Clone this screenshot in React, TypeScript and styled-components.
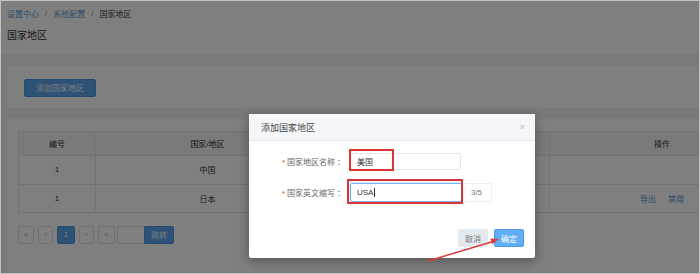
import React from 'react';
import styled, { createGlobalStyle } from 'styled-components';

const GlobalStyle = createGlobalStyle`
  html, body {
    margin: 0;
    padding: 0;
    background: #fff;
  }
  body {
    font-family: "Liberation Sans", "Noto Sans CJK SC", sans-serif;
  }
  * {
    box-sizing: border-box;
  }
`;

const Frame = styled.div`
  position: relative;
  width: 700px;
  height: 274px;
  border: 1px solid #c2c2c2;
  overflow: hidden;
  background: #fff;
`;

// the page is wider than the crop, so its right side is cut off
const Page = styled.div`
  width: 790px;
  height: 100%;
  display: flex;
  flex-direction: column;
`;

const Header = styled.header`
  padding: 6px 6px 11px;
  background: #fff;
`;

const Breadcrumb = styled.nav`
  display: flex;
  align-items: center;
  gap: 6px;
  height: 12px;
  font-size: 8px;
`;

const Crumb = styled.span<{ $link?: boolean }>`
  color: ${p => (p.$link ? '#5b9ad6' : '#444')};
`;

const Sep = styled.span`
  color: #999;
`;

const Title = styled.h1`
  margin: 10px 0 0;
  font-size: 10px;
  line-height: 14px;
  font-weight: normal;
  color: #333;
`;

const Content = styled.main`
  flex: 1;
  display: flex;
  flex-direction: column;
  gap: 11px;
  padding: 11px 6px 0;
  background: #f2f3f5;
`;

const Card = styled.section<{ $pad: string; $grow?: boolean }>`
  background: #fff;
  padding: ${p => p.$pad};
  flex: ${p => (p.$grow ? 1 : 'none')};
`;

const PrimaryButton = styled.button<{ $w: number }>`
  width: ${p => p.$w}px;
  height: 18px;
  padding: 0;
  border: 1px solid #4f96dc;
  border-radius: 2px;
  background: #5ba4ec;
  color: #f4f8fc;
  font-family: inherit;
  font-size: 8px;
`;

const Table = styled.table`
  width: 756px;
  border-collapse: collapse;
  table-layout: fixed;
  font-size: 8px;
  color: #333;
`;

const Th = styled.th`
  height: 24px;
  padding: 0;
  background: #f4f4f4;
  border: 1px solid #e6e6e6;
  font-weight: normal;
  text-align: center;
`;

const Td = styled.td<{ $h: number }>`
  height: ${p => p.$h}px;
  padding: 0;
  border: 1px solid #e6e6e6;
  text-align: center;
`;

const Actions = styled.div`
  display: flex;
  justify-content: center;
  gap: 12px;
`;

const ActionLink = styled.a`
  color: #4a90d0;
  text-decoration: none;
`;

const Pager = styled.div`
  display: flex;
  align-items: center;
  gap: 4px;
  margin-top: 13px;
`;

const PageItem = styled.span<{ $w: number; $active?: boolean }>`
  width: ${p => p.$w}px;
  height: 18px;
  display: flex;
  align-items: center;
  justify-content: center;
  border: 1px solid ${p => (p.$active ? '#4f96dc' : '#e3e3e3')};
  border-radius: 2px;
  background: ${p => (p.$active ? '#5ba4ec' : '#fff')};
  color: ${p => (p.$active ? '#f4f8fc' : '#bbb')};
  font-size: 8px;
`;

const JumpGroup = styled.div`
  display: flex;
  margin-left: -2px;
`;

const JumpInput = styled.span`
  width: 27px;
  height: 18px;
  border: 1px solid #e3e3e3;
  border-right: none;
  border-radius: 2px 0 0 2px;
`;

const JumpButton = styled(PrimaryButton)`
  border-radius: 0 2px 2px 0;
`;

const Overlay = styled.div`
  position: absolute;
  inset: 0;
  background: rgba(0, 0, 0, 0.5);
`;

const Modal = styled.div`
  position: absolute;
  left: 248px;
  top: 113px;
  width: 286px;
  height: 144px;
  display: flex;
  flex-direction: column;
  background: #fff;
  border-radius: 2px;
  box-shadow: 0 3px 12px rgba(0, 0, 0, 0.35);
`;

const ModalHeader = styled.div`
  height: 27px;
  display: flex;
  align-items: center;
  justify-content: space-between;
  padding: 0 12px;
  background: #f4f6f9;
  border-bottom: 1px solid #e8eaed;
  font-size: 9px;
  color: #444;
`;

const Close = styled.span`
  font-size: 9px;
  color: #bbb;
  margin-right: -2px;
`;

const ModalBody = styled.div`
  display: flex;
  flex-direction: column;
  gap: 13px;
  padding-top: 12px;
`;

const FormRow = styled.div`
  display: grid;
  grid-template-columns: 96px auto;
  column-gap: 5px;
  align-items: center;
`;

const Label = styled.label`
  text-align: right;
  font-size: 8px;
  color: #666;
`;

const Star = styled.span`
  color: #e4393c;
  margin-right: 2px;
`;

const Colon = styled.span`
  margin-left: 2px;
`;

const Field = styled.div`
  display: flex;
  align-items: center;
`;

const TextInput = styled.div<{ $w: number; $h: number; $focus?: boolean }>`
  width: ${p => p.$w}px;
  height: ${p => p.$h}px;
  display: flex;
  align-items: center;
  padding: 0 6px;
  border: 1px solid ${p => (p.$focus ? '#7cb3e8' : '#e6e6e6')};
  border-radius: 2px;
  box-shadow: ${p => (p.$focus ? '0 0 4px rgba(102, 175, 233, 0.6)' : 'none')};
  font-size: 8px;
  color: #333;
`;

const Caret = styled.span`
  width: 1px;
  height: 9px;
  background: #333;
  margin-left: 1px;
`;

const Addon = styled.div`
  width: 30px;
  height: 19px;
  display: flex;
  align-items: center;
  justify-content: center;
  border: 1px solid #eee;
  border-left: none;
  border-radius: 0 2px 2px 0;
  font-size: 8px;
  color: #777;
`;

const ModalFooter = styled.div`
  margin-top: auto;
  display: flex;
  justify-content: flex-end;
  gap: 6px;
  padding: 0 11px 11px;
`;

const FooterButton = styled.button<{ $primary?: boolean }>`
  width: 30px;
  height: 18px;
  padding: 0;
  border: 1px solid ${p => (p.$primary ? '#4a9ae6' : '#e4e9ee')};
  border-radius: 2px;
  background: ${p => (p.$primary ? '#62aef5' : '#e4e9ee')};
  color: ${p => (p.$primary ? '#fff' : '#777')};
  font-family: inherit;
  font-size: 8px;
`;

const Marks = styled.svg`
  position: absolute;
  left: -1px;
  top: -1px;
  pointer-events: none;
`;

export default function App() {
  return (
    <>
      <GlobalStyle />
      <Frame>
        <Page>
          <Header>
            <Breadcrumb>
              <Crumb $link>设置中心</Crumb>
              <Sep>/</Sep>
              <Crumb $link>系统配置</Crumb>
              <Sep>/</Sep>
              <Crumb>国家地区</Crumb>
            </Breadcrumb>
            <Title>国家地区</Title>
          </Header>
          <Content>
            <Card $pad="12px 17px 11px">
              <PrimaryButton $w={72}>添加国家地区</PrimaryButton>
            </Card>
            <Card $pad="12px 11px" $grow>
              <Table>
                <colgroup>
                  <col style={{ width: 77 }} />
                  <col style={{ width: 224 }} />
                  <col style={{ width: 230 }} />
                  <col style={{ width: 225 }} />
                </colgroup>
                <thead>
                  <tr>
                    <Th>编号</Th>
                    <Th>国家/地区</Th>
                    <Th>英文缩写</Th>
                    <Th>操作</Th>
                  </tr>
                </thead>
                <tbody>
                  <tr>
                    <Td $h={29}>1</Td>
                    <Td $h={29}>中国</Td>
                    <Td $h={29}>CHN</Td>
                    <Td $h={29}></Td>
                  </tr>
                  <tr>
                    <Td $h={28}>1</Td>
                    <Td $h={28}>日本</Td>
                    <Td $h={28}>JPN</Td>
                    <Td $h={28}>
                      <Actions>
                        <ActionLink>导出</ActionLink>
                        <ActionLink>禁用</ActionLink>
                      </Actions>
                    </Td>
                  </tr>
                </tbody>
              </Table>
              <Pager>
                <PageItem $w={16}>«</PageItem>
                <PageItem $w={15}>‹</PageItem>
                <PageItem $w={18} $active>1</PageItem>
                <PageItem $w={15}>›</PageItem>
                <PageItem $w={17}>»</PageItem>
                <JumpGroup>
                  <JumpInput />
                  <JumpButton $w={30}>跳转</JumpButton>
                </JumpGroup>
              </Pager>
            </Card>
          </Content>
        </Page>

        <Overlay />

        <Modal>
          <ModalHeader>
            <span>添加国家地区</span>
            <Close>×</Close>
          </ModalHeader>
          <ModalBody>
            <FormRow>
              <Label><Star>*</Star>国家地区名称<Colon>：</Colon></Label>
              <Field>
                <TextInput $w={111} $h={17}>美国</TextInput>
              </Field>
            </FormRow>
            <FormRow>
              <Label><Star>*</Star>国家英文缩写<Colon>：</Colon></Label>
              <Field>
                <TextInput $w={112} $h={19} $focus>USA<Caret /></TextInput>
                <Addon>3/5</Addon>
              </Field>
            </FormRow>
          </ModalBody>
          <ModalFooter>
            <FooterButton>取消</FooterButton>
            <FooterButton $primary>确定</FooterButton>
          </ModalFooter>
        </Modal>

        <Marks width={700} height={274} viewBox="0 0 700 274">
          <rect x={350} y={150} width={43} height={20} fill="none" stroke="#dc3535" strokeWidth={2} />
          <rect x={348} y={180} width={114} height={23} fill="none" stroke="#dc3535" strokeWidth={2} />
          <line x1={428} y1={261} x2={493} y2={241.5} stroke="#e03a3a" strokeWidth={1.5} />
          <polygon points="499,239 492.2,244.2 490.4,238.4" fill="#e03a3a" />
        </Marks>
      </Frame>
    </>
  );
}
